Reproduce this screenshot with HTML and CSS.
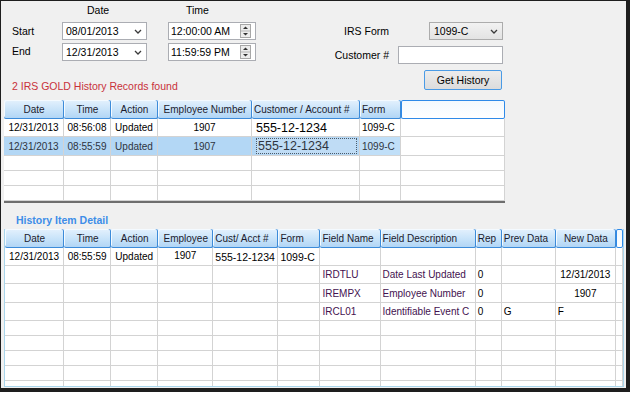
FILE: index.html
```html
<!DOCTYPE html>
<html lang="en">
<head>
    <meta charset="UTF-8">
    <title>IRS GOLD History</title>
    <link rel="stylesheet" href="styles.css">
</head>
<body>
    <div class="window">
        <!-- search filters -->
        <div class="top">
            <div class="left">
                <div class="range">
                    <span class="col-head date-head">Date</span>
                    <span class="col-head time-head">Time</span>

                    <span class="lbl">Start</span>
                    <div class="combo date">
                        <span>08/01/2013</span>
                        <svg class="chev" width="8" height="5" viewBox="0 0 8 5"><polyline points="1,1 4,4 7,1" fill="none" stroke="#3a3a3a" stroke-width="1.3"/></svg>
                    </div>
                    <div class="spin time">
                        <span>12:00:00 AM</span>
                        <svg class="spin-btn" width="11" height="14" viewBox="0 0 11 14">
                            <rect x="0.5" y="0.5" width="10" height="13" fill="#ececec" stroke="#a7a7a7"/>
                            <line x1="1" y1="7" x2="10" y2="7" stroke="#b5b5b5"/>
                            <polygon points="3,5 5.5,2.5 8,5" fill="#333"/>
                            <polygon points="3,9 5.5,11.5 8,9" fill="#333"/>
                        </svg>
                    </div>

                    <span class="lbl lbl-end">End</span>
                    <div class="combo date">
                        <span>12/31/2013</span>
                        <svg class="chev" width="8" height="5" viewBox="0 0 8 5"><polyline points="1,1 4,4 7,1" fill="none" stroke="#3a3a3a" stroke-width="1.3"/></svg>
                    </div>
                    <div class="spin time">
                        <span>11:59:59 PM</span>
                        <svg class="spin-btn" width="11" height="14" viewBox="0 0 11 14">
                            <rect x="0.5" y="0.5" width="10" height="13" fill="#ececec" stroke="#a7a7a7"/>
                            <line x1="1" y1="7" x2="10" y2="7" stroke="#b5b5b5"/>
                            <polygon points="3,5 5.5,2.5 8,5" fill="#333"/>
                            <polygon points="3,9 5.5,11.5 8,9" fill="#333"/>
                        </svg>
                    </div>
                </div>
                <div class="found">2 IRS GOLD History Records found</div>
            </div>

            <div class="lookup">
                <span class="lbl">IRS Form</span>
                <div class="combo list">
                    <span>1099-C</span>
                    <svg class="chev" width="8" height="5" viewBox="0 0 8 5"><polyline points="1,1 4,4 7,1" fill="none" stroke="#3a3a3a" stroke-width="1.3"/></svg>
                </div>
                <span class="lbl">Customer #</span>
                <div class="textbox"></div>
                <button class="btn">Get History</button>
            </div>
        </div>

        <!-- history records -->
        <div class="grid-wrap records">
            <table class="grid">
                <colgroup>
                    <col style="width:60px"><col style="width:47px"><col style="width:47px"><col style="width:94px">
                    <col style="width:108px"><col style="width:41px"><col style="width:104px">
                </colgroup>
                <tr class="head">
                    <th>Date</th><th>Time</th><th>Action</th><th>Employee Number</th>
                    <th class="l">Customer / Account #</th><th class="l">Form</th><th class="blank"></th>
                </tr>
                <tr class="data">
                    <td>12/31/2013</td><td>08:56:08</td><td>Updated</td><td>1907</td>
                    <td class="l big">555-12-1234</td><td class="l">1099-C</td><td></td>
                </tr>
                <tr class="data selected">
                    <td>12/31/2013</td><td>08:55:59</td><td>Updated</td><td>1907</td>
                    <td class="l big editing"><span>555-12-1234</span></td><td class="l light">1099-C</td><td class="plain"></td>
                </tr>
                <tr class="empty"><td></td><td></td><td></td><td></td><td></td><td></td><td></td></tr>
                <tr class="empty"><td></td><td></td><td></td><td></td><td></td><td></td><td></td></tr>
                <tr class="empty"><td></td><td></td><td></td><td></td><td></td><td></td><td></td></tr>
            </table>
        </div>

        <div class="section-title">History Item Detail</div>

        <!-- item detail -->
        <div class="grid-wrap detail">
            <table class="grid">
                <colgroup>
                    <col style="width:59px"><col style="width:47px"><col style="width:47px"><col style="width:55px">
                    <col style="width:65px"><col style="width:42px"><col style="width:60px"><col style="width:95px">
                    <col style="width:26px"><col style="width:54px"><col style="width:60px"><col style="width:7px">
                </colgroup>
                <tr class="head">
                    <th>Date</th><th>Time</th><th>Action</th><th>Employee</th><th class="l">Cust/ Acct #</th>
                    <th class="l">Form</th><th class="l">Field Name</th><th class="l">Field Description</th>
                    <th class="l">Rep</th><th class="l">Prev Data</th><th>New Data</th><th class="blank"></th>
                </tr>
                <tr class="data">
                    <td>12/31/2013</td><td>08:55:59</td><td>Updated</td><td class="up">1907</td><td class="l mid">555-12-1234</td>
                    <td class="l mid">1099-C</td><td></td><td></td><td></td><td></td><td></td><td></td>
                </tr>
                <tr class="data">
                    <td></td><td></td><td></td><td></td><td></td><td></td>
                    <td class="l field">IRDTLU</td><td class="l field">Date Last Updated</td><td class="l">0</td><td></td><td>12/31/2013</td><td></td>
                </tr>
                <tr class="data tall">
                    <td></td><td></td><td></td><td></td><td></td><td></td>
                    <td class="l field">IREMPX</td><td class="l field">Employee Number</td><td class="l">0</td><td></td><td>1907</td><td></td>
                </tr>
                <tr class="data">
                    <td></td><td></td><td></td><td></td><td></td><td></td>
                    <td class="l field">IRCL01</td><td class="l field">Identifiable Event C</td><td class="l">0</td><td class="l">G</td><td class="l">F</td><td></td>
                </tr>
                <tr class="empty"><td></td><td></td><td></td><td></td><td></td><td></td><td></td><td></td><td></td><td></td><td></td><td></td></tr>
                <tr class="empty"><td></td><td></td><td></td><td></td><td></td><td></td><td></td><td></td><td></td><td></td><td></td><td></td></tr>
                <tr class="empty"><td></td><td></td><td></td><td></td><td></td><td></td><td></td><td></td><td></td><td></td><td></td><td></td></tr>
                <tr class="empty"><td></td><td></td><td></td><td></td><td></td><td></td><td></td><td></td><td></td><td></td><td></td><td></td></tr>
                <tr class="empty"><td></td><td></td><td></td><td></td><td></td><td></td><td></td><td></td><td></td><td></td><td></td><td></td></tr>
            </table>
        </div>
    </div>
</body>
</html>
```

FILE: styles.css
```css
body {
    margin: 0;
    padding: 0;
    background: #ffffff;
    font-family: "Liberation Sans", Arial, sans-serif;
    font-size: 10px;
    color: #000;
}

/* form window */
.window {
    width: 630px;
    height: 392px;
    box-sizing: border-box;
    background: #f0f0f0;
    border: 1px solid #1e1e1e;
    border-right-width: 4px;
    border-bottom-width: 4px;
    overflow: hidden;
}

/* filter area */
.top {
    height: 99px;
    display: flex;
}

.left {
    margin-left: 11px;
}

.range {
    display: grid;
    grid-template-columns: 50px 85px 21px 88px;
    grid-template-rows: 15px 18px 18px;
    row-gap: 3px;
    padding-top: 3px;
    font-size: 10.5px;
}

.col-head {
    line-height: 13px;
}

.date-head {
    grid-column: 2;
    padding-left: 25px;
}

.time-head {
    grid-column: 4;
    padding-left: 18px;
}

.lbl {
    grid-column: 1;
    align-self: center;
    font-size: 10.5px;
}

.lbl-end {
    margin-top: -3px;
}

.combo,
.spin,
.textbox {
    box-sizing: border-box;
    height: 18px;
    border: 1px solid #abadb3;
    background: #fff;
    display: flex;
    align-items: center;
    padding-left: 3px;
    font-size: 10.5px;
}

.combo {
    justify-content: space-between;
    padding-right: 4px;
}

.combo.date {
    grid-column: 2;
}

.spin {
    grid-column: 4;
    justify-content: space-between;
    padding-right: 4px;
    padding-left: 2px;
}

.found {
    margin-top: 18px;
    line-height: 14px;
    color: #c8313a;
    font-size: 10.5px;
}

/* lookup block */
.lookup {
    margin-left: 74px;
    padding-top: 21px;
    display: grid;
    grid-template-columns: 59px 105px;
    grid-template-rows: 18px 18px 20px;
    column-gap: 9px;
    row-gap: 6px;
}

.lookup .lbl {
    text-align: right;
}

.combo.list {
    grid-column: 2;
    justify-self: end;
    width: 74px;
    background: linear-gradient(#f2f2f2, #e3e3e3);
    border-color: #acacac;
    padding-left: 4px;
}

.textbox {
    grid-column: 2;
}

.btn {
    grid-column: 2;
    justify-self: end;
    width: 78px;
    height: 20px;
    margin-right: 1px;
    background: linear-gradient(#ececec, #dcdcdc);
    border: 1px solid #4a9be6;
    border-radius: 2px;
    font-family: inherit;
    font-size: 10.5px;
    color: #000;
    padding: 0;
}

/* grids */
.grid-wrap {
    margin-left: 3px;
    overflow: hidden;
    background: #fff;
}

.records {
    width: 501px;
    border-bottom: 2px solid #6e6e6e;
}

.detail {
    width: 618px;
    height: 157px;
    border: 1px solid #a9d6ec;
    border-top: none;
}

.grid {
    border-collapse: separate;
    border-spacing: 0;
    table-layout: fixed;
    width: 100%;
}

.grid th,
.grid td {
    padding: 0;
    text-align: center;
    white-space: nowrap;
    overflow: hidden;
    font-weight: normal;
}

.grid td {
    border-right: 1px solid #d3d3d3;
    border-bottom: 1px solid #d3d3d3;
}

.grid .l {
    text-align: left;
    padding-left: 2px;
}

.head {
    height: 19px;
}

.grid th {
    background: linear-gradient(#e4f1fd, #c6e2f9 55%, #afd4f5);
    box-shadow: inset -1px 0 #3c8bd9, inset 0 -1px #3c8bd9, inset 1px 1px #f4faff;
    border-radius: 2px;
    color: #1b1b2e;
}

.grid th.blank {
    background: linear-gradient(#f3f9fe, #ffffff);
    box-shadow: inset 0 0 0 1px #2f8ae8;
}

.data {
    height: 18px;
}

.data.tall {
    height: 19px;
}

.empty {
    height: 15px;
}

.big {
    font-size: 12.5px;
}

.grid .big.l {
    padding-left: 4px;
}

.mid {
    font-size: 10.5px;
}

.up {
    vertical-align: top;
    padding-top: 2px !important;
}

.field {
    color: #44124f;
}

/* selected record */
.selected td {
    background: #b3d7f5;
    color: #2e3440;
}

.selected td.editing {
    padding: 1px 2px 1px 2px;
}

.selected td.editing span {
    display: block;
    border: 1px dotted #4a5a6a;
    padding-left: 1px;
    line-height: 14px;
    background: #bfdcf5;
}

.selected td.light {
    background: #c0dff8;
}

.selected td.plain {
    background: #fff;
}

.section-title {
    margin: 10px 0 2px 15px;
    line-height: 14px;
    font-weight: bold;
    font-size: 10.5px;
    color: #3d8de8;
}
```
